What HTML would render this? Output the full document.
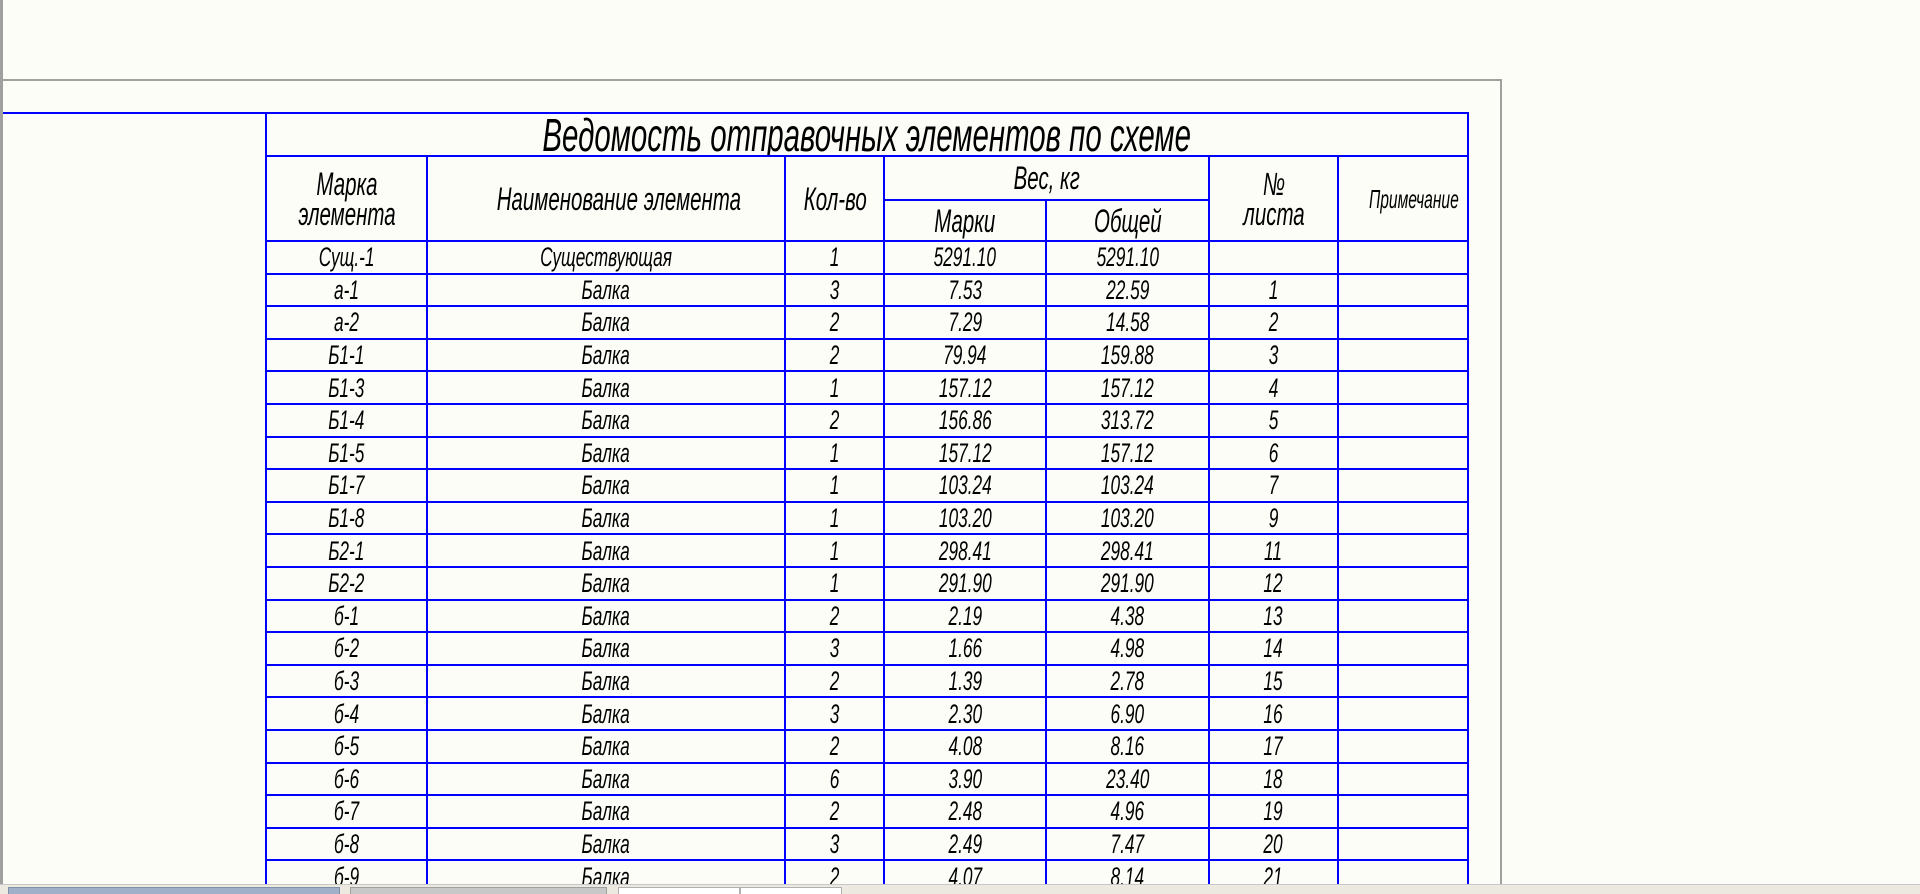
<!DOCTYPE html>
<html style="width:1920px;height:894px;overflow:hidden;"><head><meta charset="utf-8">
<style>
html,body{margin:0;padding:0;}
body{width:1920px;height:894px;background:#fdfdf8;position:relative;overflow:hidden;font-family:"Liberation Sans","DejaVu Sans",sans-serif;}
.gl{position:absolute;background:#a0a0a0;}
table{position:absolute;left:265px;top:112px;width:1204px;border-collapse:collapse;table-layout:fixed;}
td{border:2px solid #0000ff;padding:0;text-align:center;vertical-align:middle;font-style:italic;color:#000;white-space:nowrap;overflow:hidden;}
td span{display:inline-block;transform:scaleX(0.64);}
.t td{font-size:46px;height:41px;line-height:40px;}
.h{font-size:32px;line-height:30px;}
.d td{font-size:27px;height:30.6px;line-height:28px;}
.bar{position:absolute;left:0;top:884px;width:1920px;height:10px;background:#ece9e0;border-top:1px solid #c8c8c8;z-index:2;}
.btn{position:absolute;top:887px;height:7px;background:#9fb0c8;border:1px solid #8090a8;z-index:3;}
</style></head><body>
<div class="gl" style="left:0;top:0;width:3px;height:884px;"></div>
<div class="gl" style="left:3px;top:79px;width:1499px;height:2px;"></div>
<div class="gl" style="left:1500px;top:79px;width:2px;height:805px;"></div>
<div style="position:absolute;left:3px;top:112px;width:263px;height:2px;background:#0000ff;"></div>
<table>
<colgroup><col style="width:161px"><col style="width:358px"><col style="width:99px"><col style="width:162px"><col style="width:163px"><col style="width:129px"><col style="width:130px"></colgroup>
<tr class="t"><td colspan="7"><span>Ведомость отправочных элементов по схеме</span></td></tr>
<tr style="height:44px"><td rowspan="2" class="h"><span>Марка<br>элемента</span></td><td rowspan="2" class="h"><span>Наименование элемента</span></td><td rowspan="2" class="h"><span>Кол-во</span></td><td colspan="2" class="h"><span>Вес, кг</span></td><td rowspan="2" class="h"><span>№<br>листа</span></td><td rowspan="2" class="h" style="font-size:26px"><span style="transform:scaleX(0.6)">Примечание</span></td></tr>
<tr style="height:41px"><td class="h"><span>Марки</span></td><td class="h"><span>Общей</span></td></tr>
<tr class="d"><td><span>Сущ.-1</span></td><td><span>Существующая</span></td><td><span>1</span></td><td><span>5291.10</span></td><td><span>5291.10</span></td><td></td><td></td></tr>
<tr class="d"><td><span>а-1</span></td><td><span>Балка</span></td><td><span>3</span></td><td><span>7.53</span></td><td><span>22.59</span></td><td><span>1</span></td><td></td></tr>
<tr class="d"><td><span>а-2</span></td><td><span>Балка</span></td><td><span>2</span></td><td><span>7.29</span></td><td><span>14.58</span></td><td><span>2</span></td><td></td></tr>
<tr class="d"><td><span>Б1-1</span></td><td><span>Балка</span></td><td><span>2</span></td><td><span>79.94</span></td><td><span>159.88</span></td><td><span>3</span></td><td></td></tr>
<tr class="d"><td><span>Б1-3</span></td><td><span>Балка</span></td><td><span>1</span></td><td><span>157.12</span></td><td><span>157.12</span></td><td><span>4</span></td><td></td></tr>
<tr class="d"><td><span>Б1-4</span></td><td><span>Балка</span></td><td><span>2</span></td><td><span>156.86</span></td><td><span>313.72</span></td><td><span>5</span></td><td></td></tr>
<tr class="d"><td><span>Б1-5</span></td><td><span>Балка</span></td><td><span>1</span></td><td><span>157.12</span></td><td><span>157.12</span></td><td><span>6</span></td><td></td></tr>
<tr class="d"><td><span>Б1-7</span></td><td><span>Балка</span></td><td><span>1</span></td><td><span>103.24</span></td><td><span>103.24</span></td><td><span>7</span></td><td></td></tr>
<tr class="d"><td><span>Б1-8</span></td><td><span>Балка</span></td><td><span>1</span></td><td><span>103.20</span></td><td><span>103.20</span></td><td><span>9</span></td><td></td></tr>
<tr class="d"><td><span>Б2-1</span></td><td><span>Балка</span></td><td><span>1</span></td><td><span>298.41</span></td><td><span>298.41</span></td><td><span>11</span></td><td></td></tr>
<tr class="d"><td><span>Б2-2</span></td><td><span>Балка</span></td><td><span>1</span></td><td><span>291.90</span></td><td><span>291.90</span></td><td><span>12</span></td><td></td></tr>
<tr class="d"><td><span>б-1</span></td><td><span>Балка</span></td><td><span>2</span></td><td><span>2.19</span></td><td><span>4.38</span></td><td><span>13</span></td><td></td></tr>
<tr class="d"><td><span>б-2</span></td><td><span>Балка</span></td><td><span>3</span></td><td><span>1.66</span></td><td><span>4.98</span></td><td><span>14</span></td><td></td></tr>
<tr class="d"><td><span>б-3</span></td><td><span>Балка</span></td><td><span>2</span></td><td><span>1.39</span></td><td><span>2.78</span></td><td><span>15</span></td><td></td></tr>
<tr class="d"><td><span>б-4</span></td><td><span>Балка</span></td><td><span>3</span></td><td><span>2.30</span></td><td><span>6.90</span></td><td><span>16</span></td><td></td></tr>
<tr class="d"><td><span>б-5</span></td><td><span>Балка</span></td><td><span>2</span></td><td><span>4.08</span></td><td><span>8.16</span></td><td><span>17</span></td><td></td></tr>
<tr class="d"><td><span>б-6</span></td><td><span>Балка</span></td><td><span>6</span></td><td><span>3.90</span></td><td><span>23.40</span></td><td><span>18</span></td><td></td></tr>
<tr class="d"><td><span>б-7</span></td><td><span>Балка</span></td><td><span>2</span></td><td><span>2.48</span></td><td><span>4.96</span></td><td><span>19</span></td><td></td></tr>
<tr class="d"><td><span>б-8</span></td><td><span>Балка</span></td><td><span>3</span></td><td><span>2.49</span></td><td><span>7.47</span></td><td><span>20</span></td><td></td></tr>
<tr class="d"><td><span>б-9</span></td><td><span>Балка</span></td><td><span>2</span></td><td><span>4.07</span></td><td><span>8.14</span></td><td><span>21</span></td><td></td></tr>
</table>
<div class="bar"></div>
<div class="btn" style="left:8px;width:330px;"></div>
<div class="btn" style="left:350px;width:255px;background:#c8c8c8;border-color:#a0a0a0;"></div>
<div class="btn" style="left:618px;width:120px;background:#fff;border-color:#b0b0b0;"></div>
<div class="btn" style="left:740px;width:100px;background:#fff;border-color:#b0b0b0;"></div>
</body></html>
